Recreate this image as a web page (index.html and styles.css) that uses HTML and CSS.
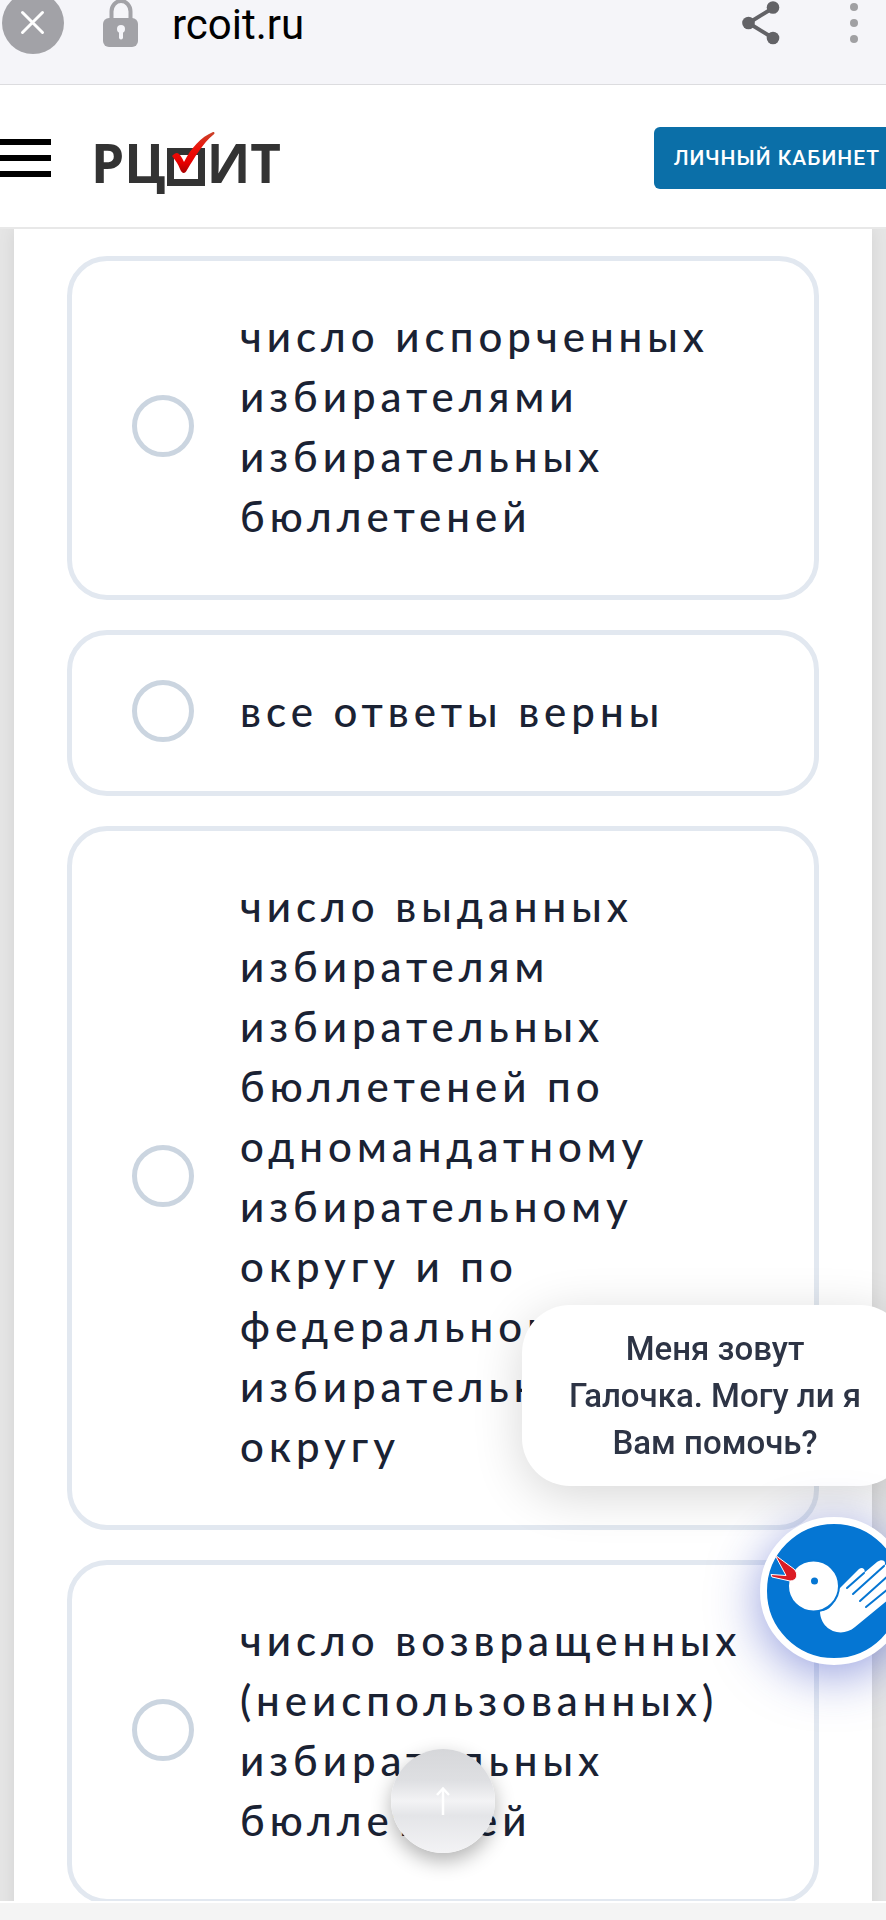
FILE: index.html
```html
<!DOCTYPE html>
<html lang="ru">
<head>
    <meta charset="UTF-8">
    <meta name="viewport" content="width=device-width, initial-scale=1.0">
    <title>rcoit.ru</title>
    <link rel="stylesheet" href="styles.css">
</head>
<body>
    <div class="browser-bar">
        <button class="icon-btn" aria-label="Закрыть">
            <svg width="62" height="62" viewBox="0 0 62 62"><circle cx="31" cy="31" r="31" fill="#a2a2a7"/><path d="M20.500 20.500L40.500 40.500M40.500 20.500L20.500 40.500" stroke="#fff" stroke-width="3" stroke-linecap="round"/></svg>
        </button>
        <svg class="lock" width="36" height="48" viewBox="0 0 36 48"><path d="M8.500 20V12.500a9.500 10.500 0 0 1 19 0V20" fill="none" stroke="#a2a2a7" stroke-width="4"/><rect x="0" y="19" width="35" height="29" rx="6" fill="#a2a2a7"/><circle cx="18" cy="30" r="4" fill="#f5f5f9"/><path d="M18 31v7.500" stroke="#f5f5f9" stroke-width="4" stroke-linecap="round"/></svg>
        <span class="url">rcoit.ru</span>
        <button class="icon-btn" aria-label="Поделиться">
            <svg width="38" height="44" viewBox="0 0 38 44"><path d="M31 7L6.500 22L31 37" fill="none" stroke="#636367" stroke-width="4"/><g fill="#636367"><circle cx="31" cy="6.500" r="6.300"/><circle cx="6.500" cy="22" r="6.300"/><circle cx="31" cy="37" r="6.300"/></g></svg>
        </button>
        <button class="icon-btn menu-dots" aria-label="Меню браузера">
            <svg width="8" height="42" viewBox="0 0 8 42"><g fill="#a0a0a3"><circle cx="4" cy="5" r="4"/><circle cx="4" cy="21" r="4"/><circle cx="4" cy="37" r="4"/></g></svg>
        </button>
    </div>

    <header class="header">
        <button class="burger" aria-label="Меню"><i></i><i></i><i></i></button>
        <a class="logo" href="#" aria-label="РЦОИТ">
            <span>РЦ</span>
            <svg width="48" height="58" viewBox="0 0 48 58">
                <defs>
                    <linearGradient id="tick" x1="0" y1="0" x2="0" y2="1"><stop offset="0" stop-color="#c8442c"/><stop offset=".4" stop-color="#ee1008"/><stop offset=".75" stop-color="#e60000"/><stop offset="1" stop-color="#a80000"/></linearGradient>
                </defs>
                <path d="M3.500 21.500h31v31h-31z" fill="#fff" stroke="#333" stroke-width="7"/>
                <path d="M5 26C8 23 10 22 12 24C14 26 15 28 17 32C24 18 34 7 46 2C48 2 48 4 46 5C36 13 28 27 20 40C18 44 15 44 13 39C11 34 9 31 5 26z" fill="url(#tick)"/>
            </svg>
            <span>ИТ</span>
        </a>
        <a class="account-btn" href="#">ЛИЧНЫЙ КАБИНЕТ</a>
    </header>

    <main class="panel">
        <form class="answers">
            <label class="answer">
                <input type="radio" name="answer" value="1">
                <span>число испорченных избирателями избирательных бюллетеней</span>
            </label>
            <label class="answer">
                <input type="radio" name="answer" value="2">
                <span>все ответы верны</span>
            </label>
            <label class="answer">
                <input type="radio" name="answer" value="3">
                <span>число выданных избирателям избирательных бюллетеней по одномандатному избирательному округу и по федеральному избирательному округу</span>
            </label>
            <label class="answer">
                <input type="radio" name="answer" value="4">
                <span>число возвращенных (неиспользованных) избирательных бюллетеней</span>
            </label>
        </form>
    </main>

    <!-- Чат-помощник -->
    <div class="assistant">
        <div class="assistant-text">Меня зовут Галочка. Могу ли я Вам помочь?</div>
        <button class="assistant-btn" aria-label="Помощник">
            <svg width="134" height="134" viewBox="0 0 134 134">
                <path d="M53 87C60 88 69 81 71 66L92 45C96 42 99 46 97 49L110 38C116 34 120 38 117 42L128 33C133 30 136 35 133 39L133 66L88 103C74 115 53 106 53 87z" fill="#fff"/>
                <g stroke="#0576d3" stroke-width="2" stroke-linecap="round"><path d="M97 49L80 64M117 42L86 70M132 42L93 77M132 56L99 83"/></g>
                <circle cx="46.500" cy="62" r="25.500" fill="#fff" stroke="#0576d3" stroke-width="2"/>
                <path d="M8 31L27 45C32 50 30 57 23 57L5 53L4 50.500L19 51.500z" stroke="#fff" stroke-width="1" fill="#dc1c24"/>
                <circle cx="47.500" cy="57" r="3.500" fill="#0576d3"/>
            </svg>
        </button>
    </div>

    <button class="up-btn" aria-label="Наверх">
        <svg width="16" height="30" viewBox="0 0 16 30"><path d="M8 29V3" stroke="#fff" stroke-width="2.500"/><path d="M2 9L8 2.500L14 9" fill="none" stroke="#fff" stroke-width="2.500"/></svg>
    </button>

    <div class="bottom-bar"></div>
</body>
</html>
```
FILE: styles.css
```css
* { box-sizing: border-box; }
body { margin: 0; min-height: 100vh; display: flex; flex-direction: column; overflow: hidden; font-family: Roboto, Arial, sans-serif; background: #e5e5e5; }
button { padding: 0; border: none; background: none; cursor: pointer; }
svg { display: block; flex-shrink: 0; }
a { text-decoration: none; }

/* адресная строка */
.browser-bar { display: flex; align-items: center; margin-top: -8px; padding: 0 28px 30px 2px; background: #f5f5f9; border-bottom: 1px solid #dcdcdf; }
.lock { margin: 0 33px 0 39px; }
.url { flex: 1; padding-top: 4px; font-size: 42px; line-height: 48px; color: #000; }
.menu-dots { margin-left: 70px; }

/* шапка сайта */
.header { position: relative; z-index: 1; display: flex; align-items: center; height: 144px; padding-top: 4px; background: #fff; border-bottom: 2px solid #e8e8e8; overflow: hidden; }
.burger { width: 51px; display: flex; flex-direction: column; gap: 10px; }
.burger i { height: 6px; background: #000; }
.logo { display: flex; align-items: center; gap: 1px; margin: 9px 0 0 40px; color: #333; font: bold 53px/58px "Open Sans", sans-serif; }
.logo svg { margin-right: -9px; margin-bottom: 8px; }
.account-btn { margin-left: auto; margin-right: -14px; padding: 0 20px; background: #0b6fa8; border-radius: 6px; color: #fff; font-size: 21px; line-height: 62px; font-weight: 500; letter-spacing: 1px; white-space: nowrap; }

/* варианты ответа */
.panel { flex: 1; margin: 0 14px; padding: 27px 53px 18px; background: #fff; box-shadow: 0 0 16px rgba(0,0,0,0.08); }
.answers { display: flex; flex-direction: column; gap: 30px; }
.answer { display: flex; align-items: center; gap: 46px; padding: 45px 40px 49px 60px; border: 5px solid #e2e8f0; border-radius: 40px; color: #1a2233; font: 500 42px/60px Lato, "Open Sans", sans-serif; letter-spacing: 5px; cursor: pointer; }
.answer input { appearance: none; flex: none; width: 62px; height: 62px; margin: 0; border: 5px solid #cbd5e0; border-radius: 50%; }
.answer input:checked { background: #0b6fa8; }

/* помощник */
.assistant { position: fixed; right: -22px; bottom: 255px; display: flex; flex-direction: column; align-items: flex-end; gap: 31px; }
.assistant-text { width: 386px; padding: 20px 40px; border-radius: 48px; background: #fff; color: #2d3445; font-size: 33px; line-height: 47px; font-weight: 500; text-align: center; box-shadow: 0 10px 50px rgba(0,0,0,0.16); }
.assistant-btn { width: 148px; height: 148px; border: 7px solid #fff; border-radius: 50%; background: #0576d3; box-shadow: 0 10px 50px rgba(40,60,190,0.5); }

.up-btn { position: fixed; left: 50%; bottom: 67px; width: 104px; height: 104px; margin-left: -52px; display: flex; align-items: center; justify-content: center; border-radius: 50%; background: linear-gradient(#d6d7da, #dedfe2 30%, #f3f3f5 50%, #e4e5e8 64%, #f3f3f5); box-shadow: 0 8px 20px rgba(0,0,0,0.3); }

.bottom-bar { position: fixed; left: 0; right: 0; bottom: 0; height: 19px; background: #f4f4f4; border-top: 2px solid #fff; }
```
